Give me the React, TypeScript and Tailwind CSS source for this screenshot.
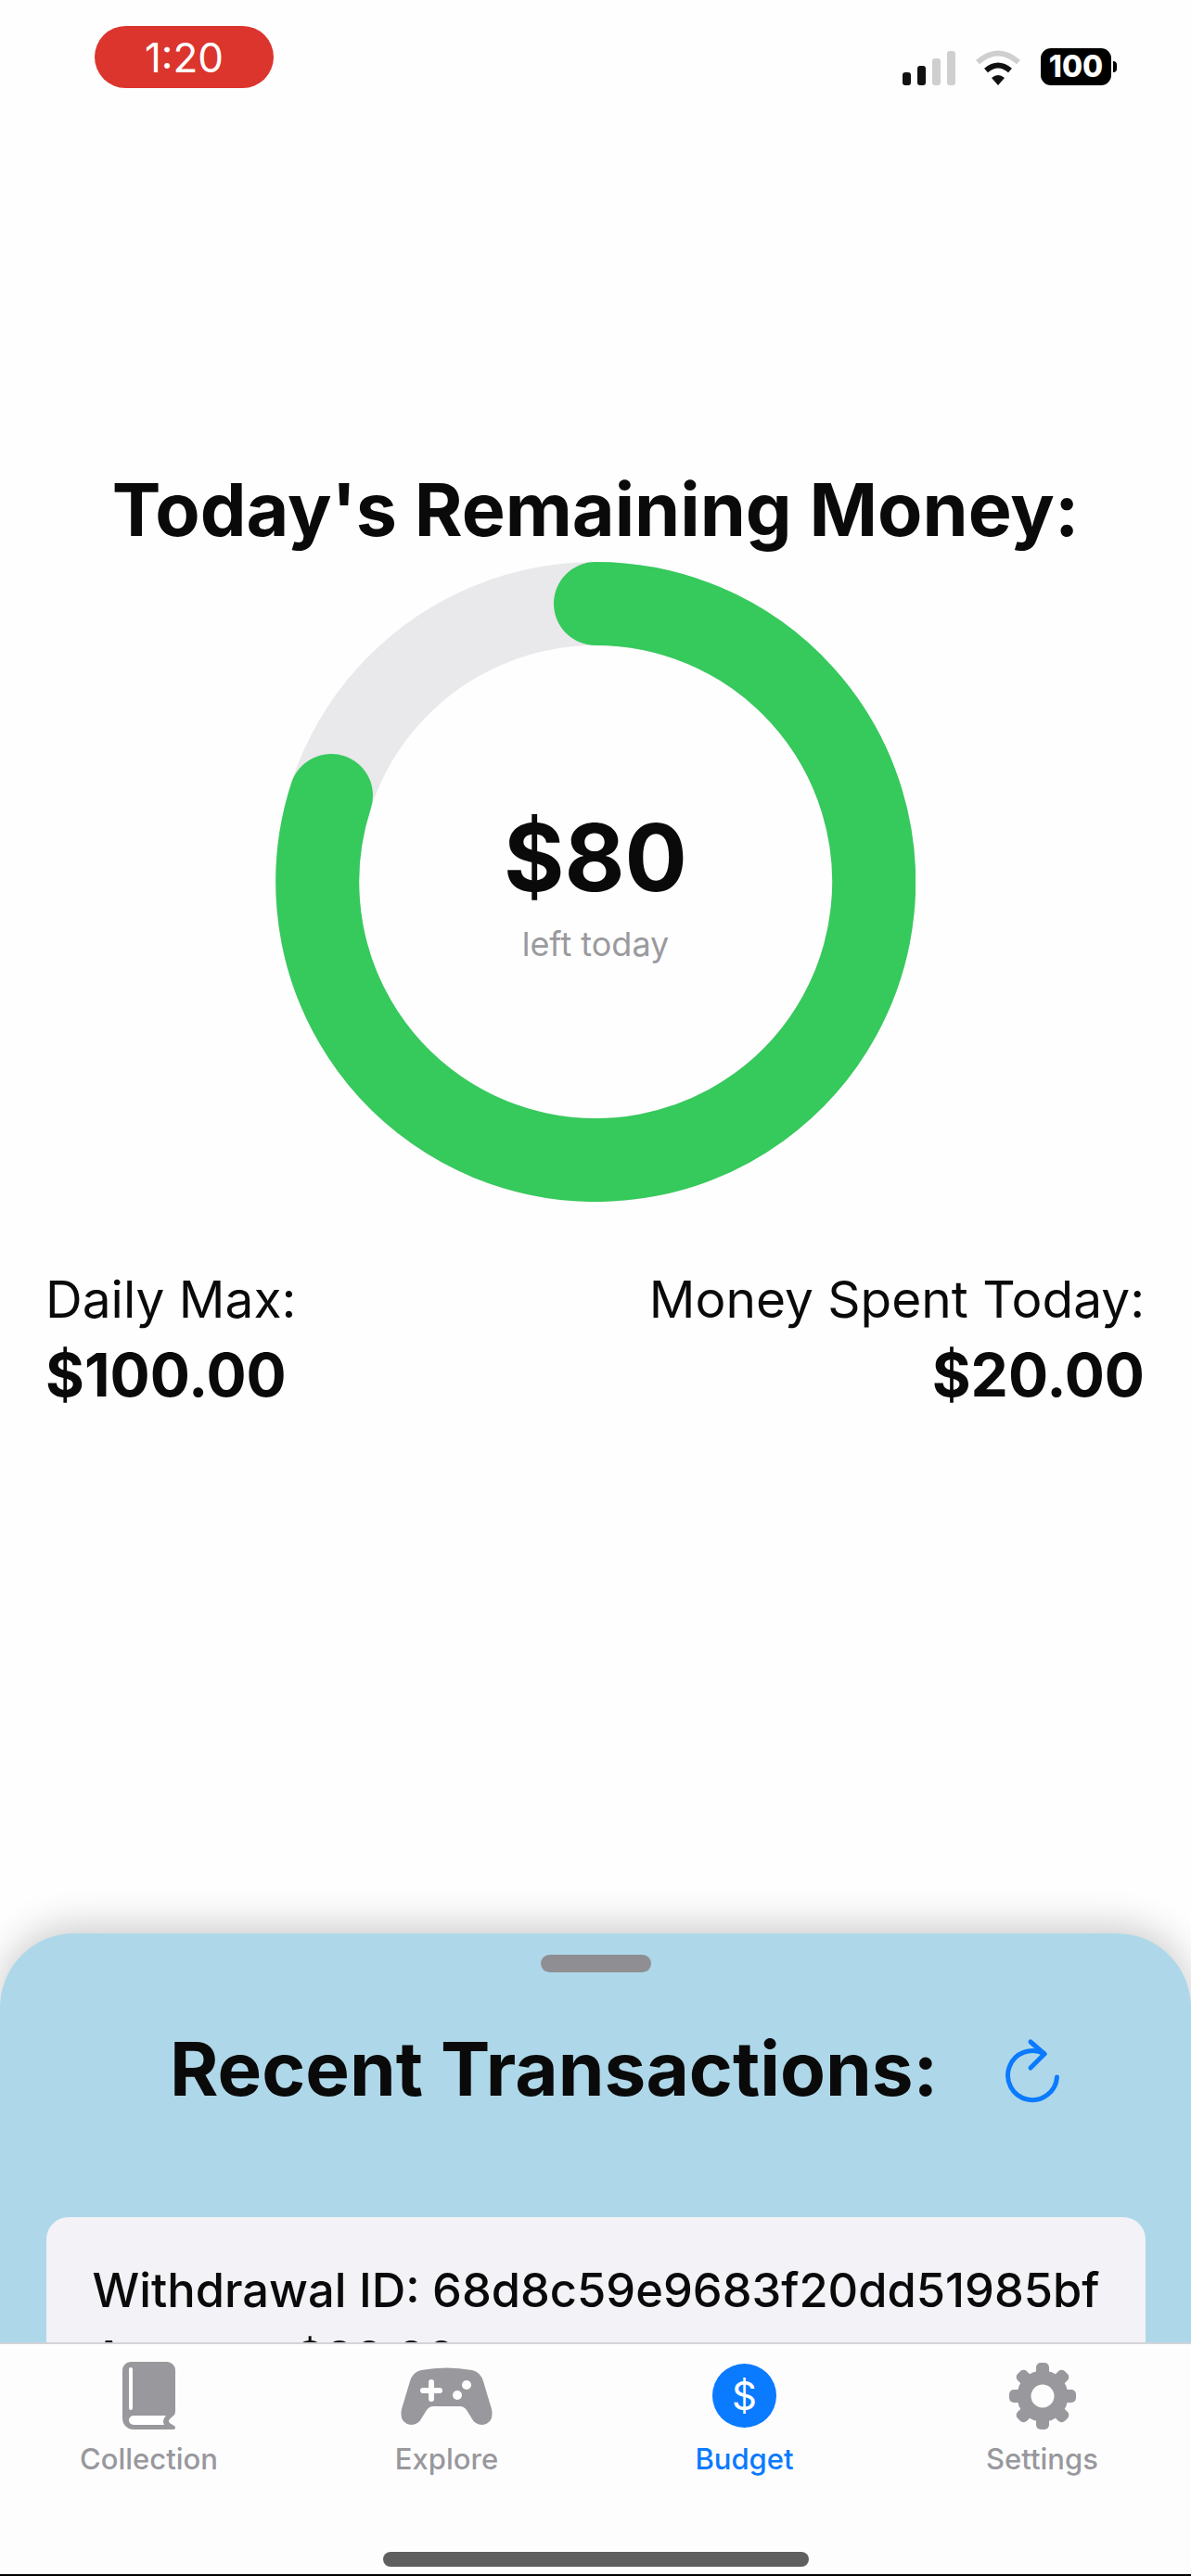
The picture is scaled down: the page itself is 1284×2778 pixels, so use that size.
const font = { fontFamily: '"Inter", "Liberation Sans", sans-serif' };

const tabs = ["Collection", "Explore", "Budget", "Settings"];

function BookIcon() {
  return (
    <svg width="57" height="73" viewBox="0 0 57 73">
      <path
        fill="#98989d"
        d="M9 0H48a9 9 0 0 1 9 9V54q0 3-3 5q-4 3-4 5q0 2 4 4q3 1 3 3q0 2-3 2H12a12 12 0 0 1-12-12V9a9 9 0 0 1 9-9z"
      />
      <rect x="7" y="6" width="4" height="46" rx="2" fill="#fff" />
      <path fill="#fff" d="M12 58H47q-3 3-3 6q0 2 1 4H12a5 5 0 0 1 0-10z" />
    </svg>
  );
}

function ControllerIcon() {
  return (
    <svg width="99" height="62" viewBox="0 0 99 62">
      <path
        fill="#98989d"
        d="M22 3Q49-2 77 3Q86 5 89 15L98 45Q101 60 88 62Q80 62 76 54L71 46Q68 42 64 42H35Q31 42 28 46L23 54Q19 62 11 62Q-2 60 1 45L10 15Q13 5 22 3Z"
      />
      <path d="M33 16V34M24 25H42" stroke="#fff" strokeWidth="6" strokeLinecap="round" />
      <circle cx="61" cy="30" r="5" fill="#fff" />
      <circle cx="71" cy="19" r="5" fill="#fff" />
    </svg>
  );
}

function GearIcon() {
  const angles = [0, 45, 90, 135, 180, 225, 270, 315];
  return (
    <svg width="72" height="72" viewBox="0 0 72 72">
      {angles.map((a) => (
        <rect key={a} x="29" y="0" width="14" height="20" rx="5" fill="#98989d" transform={`rotate(${a} 36 36)`} />
      ))}
      <circle cx="36" cy="36" r="20" fill="none" stroke="#98989d" strokeWidth="15" />
    </svg>
  );
}

function RefreshIcon() {
  return (
    <svg width="60" height="74" viewBox="0 0 60 74" fill="none" stroke="#0a7aff" strokeWidth="5" strokeLinecap="round" strokeLinejoin="round">
      <path d="M57.5 42A26.5 26.5 0 1 1 44 17" />
      <path d="M29 4L44 17L29 32" />
    </svg>
  );
}

function SignalIcon() {
  return (
    <div className="flex items-end gap-[7px]">
      <div className="w-[9px] h-[14px] rounded-[3px] bg-[#111]" />
      <div className="w-[9px] h-[21px] rounded-[3px] bg-[#111]" />
      <div className="w-[9px] h-[29px] rounded-[3px] bg-[#cfcfcf]" />
      <div className="w-[9px] h-[37px] rounded-[3px] bg-[#cfcfcf]" />
    </div>
  );
}

function WifiIcon() {
  return (
    <svg width="50" height="38" viewBox="0 0 50 38" fill="none" strokeLinecap="butt">
      <path d="M3 13Q25-6 47 13" stroke="#cfcfcf" strokeWidth="6" />
      <path d="M12 22Q25 11 38 22" stroke="#111" strokeWidth="6" />
      <path d="M18 30L25 38L32 30Q25 24 18 30Z" fill="#111" />
    </svg>
  );
}

function Ring() {
  return (
    <div className="relative w-[690px] h-[690px] mt-[11px]">
      <svg width="690" height="690" viewBox="0 0 690 690" fill="none">
        <circle cx="345" cy="345" r="300" stroke="#e9e8eb" strokeWidth="90" />
        <path
          d="M345 45A300 300 0 1 1 60 252"
          stroke="#36c95c"
          strokeWidth="90"
          strokeLinecap="round"
        />
      </svg>
      <div className="absolute inset-0 flex flex-col items-center justify-center pt-[36px]">
        <div className="text-[100px] leading-[110px] font-bold text-[#0a0a0a] mt-[-30px]">$80</div>
        <div className="text-[36px] leading-[40px] text-[#9a9a9e] mt-[18px]">left today</div>
      </div>
    </div>
  );
}

export default function App() {
  return (
    <div style={font} className="w-[1284px] h-[2778px] bg-[#fefefe] flex flex-col overflow-hidden">
      <div className="flex items-start justify-between pl-[102px] pr-[80px] pt-[28px]">
        <div className="w-[193px] h-[67px] rounded-full bg-[#db352e] flex items-center justify-center text-white text-[44px]">
          1:20
        </div>
        <div className="flex items-end gap-[21px] mt-[24px]">
          <SignalIcon />
          <WifiIcon />
          <div className="flex items-center gap-[2px]">
            <div className="w-[76px] h-[40px] rounded-[11px] bg-black flex items-center justify-center text-white text-[32px] font-extrabold">
              100
            </div>
            <div className="w-[4px] h-[12px] rounded-r-full bg-black" />
          </div>
        </div>
      </div>

      <main className="flex flex-col items-center pt-[408px]">
        <h1 className="text-[79px] leading-[92px] font-bold text-[#0a0a0a]">Today's Remaining Money:</h1>
        <Ring />
        <div className="w-full flex justify-between pl-[49px] pr-[50px] mt-[71px] text-[#0a0a0a]">
          <div>
            <div className="text-[55px] leading-[68px]">Daily Max:</div>
            <div className="text-[64px] leading-[74px] font-bold mt-[11px]">$100.00</div>
          </div>
          <div className="text-right">
            <div className="text-[55px] leading-[68px]">Money Spent Today:</div>
            <div className="text-[64px] leading-[74px] font-bold mt-[11px]">$20.00</div>
          </div>
        </div>
      </main>

      <section className="mt-auto h-[441px] shrink-0 bg-[#aed8e9] rounded-t-[80px] shadow-[0_-8px_40px_rgba(0,0,0,0.2)] flex flex-col items-center overflow-hidden pt-[23px]">
        <div className="w-[119px] h-[19px] shrink-0 rounded-full bg-[#8e8e93]" />
        <div className="w-full shrink-0 flex items-center mt-[58px] pl-[183px]">
          <h2 className="text-[80px] leading-[92px] font-bold text-[#0a0a0a]">Recent Transactions:</h2>
          <div className="ml-[71px] mt-[8px]">
            <RefreshIcon />
          </div>
        </div>
        <div className="w-[1185px] mt-[114px] rounded-t-[24px] bg-[#f2f2f7] pl-[50px] pt-[42px] text-[50.6px] leading-[73px] font-medium whitespace-nowrap text-[#0a0a0a] h-[300px] shrink-0">
          <div>Withdrawal ID: 68d8c59e9683f20dd51985bf</div>
          <div>Amount: $20.00</div>
        </div>
      </section>

      <nav className="h-[252px] shrink-0 bg-[#fdfdfe] border-t-2 border-t-[#d4d4d8] border-b-2 border-b-black relative z-10 pt-[18px]">
        <div className="grid grid-cols-4">
          {tabs.map((t) => (
            <div key={t} className="flex flex-col items-center">
              <div className="h-[75px] flex items-center justify-center">
                {t === "Collection" && <BookIcon />}
                {t === "Explore" && <ControllerIcon />}
                {t === "Budget" && (
                  <div className="w-[69px] h-[69px] rounded-full bg-[#0a7aff] flex items-center justify-center text-white text-[42px]">
                    $
                  </div>
                )}
                {t === "Settings" && <GearIcon />}
              </div>
              <div className={`text-[31px] leading-[40px] font-medium mt-[11px] ${t === "Budget" ? "text-[#0a7aff]" : "text-[#98989d]"}`}>
                {t}
              </div>
            </div>
          ))}
        </div>
        <div className="w-[459px] h-[16px] rounded-full bg-[#5f5f5f] mx-auto mt-[80px]" />
      </nav>
    </div>
  );
}
